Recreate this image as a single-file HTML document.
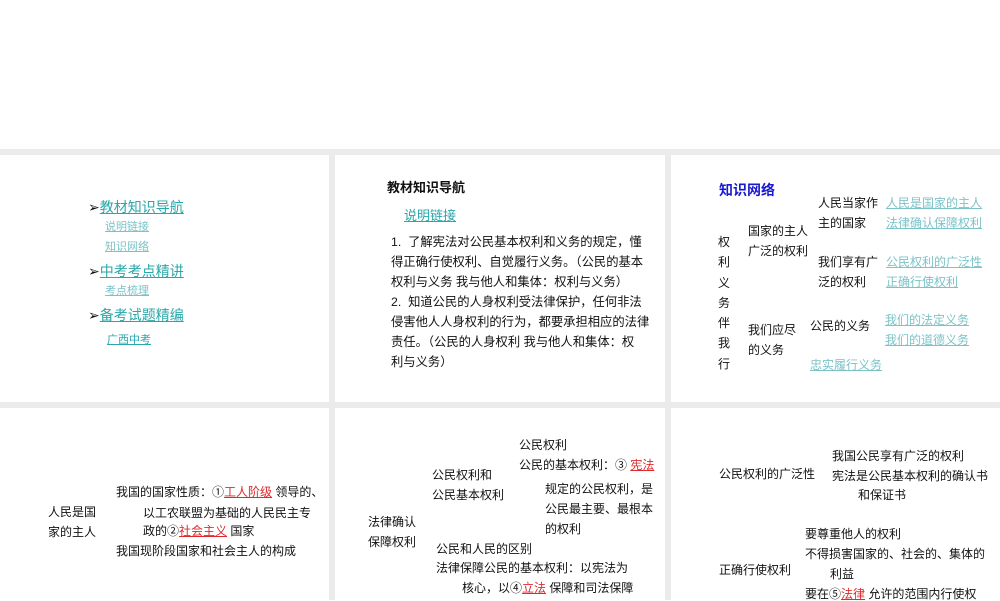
<!DOCTYPE html>
<html><head><meta charset="utf-8"><style>
body{margin:0;width:1000px;height:600px;position:relative;background:#fff;overflow:hidden;font-family:"Liberation Sans","Noto Sans CJK SC",sans-serif;}
.g{position:absolute;background:#ebebeb;}
.t{position:absolute;white-space:nowrap;font-size:12px;color:#111;line-height:14px;}
.l{color:#2aa7a9;text-decoration:underline;}
.lt{color:#7cc3c8;text-decoration:underline;}
.r{color:#e0292b;text-decoration:underline;text-decoration-color:#e0292b;}
.b{font-weight:bold;}
.s{font-family:"Liberation Sans","WenQuanYi Zen Hei",sans-serif;font-size:12.3px !important;}
</style></head><body>
<div class="g" style="left:0;top:149px;width:1000px;height:6px"></div>
<div class="g" style="left:0;top:402px;width:1000px;height:6px"></div>
<div class="g" style="left:329px;top:149px;width:6px;height:451px"></div>
<div class="g" style="left:665px;top:149px;width:6px;height:451px"></div>

<div class="t" style="left:88px;top:199px;font-size:14px;line-height:16px">➢<span class="l">教材知识导航</span></div>
<div class="t lt" style="left:105px;top:220px;font-size:11px">说明链接</div>
<div class="t lt" style="left:105px;top:240px;font-size:11px">知识网络</div>
<div class="t" style="left:88px;top:263px;font-size:14px;line-height:16px">➢<span class="l">中考考点精讲</span></div>
<div class="t lt" style="left:105px;top:284px;font-size:11px">考点梳理</div>
<div class="t" style="left:88px;top:307px;font-size:14px;line-height:16px">➢<span class="l">备考试题精编</span></div>
<div class="t l" style="left:107px;top:333px;font-size:11px">广西中考</div>

<div class="t b" style="left:387px;top:181px;font-size:13px">教材知识导航</div>
<div class="t l" style="left:404px;top:209px;font-size:13px">说明链接</div>
<div class="t s" style="left:391px;top:235px">1.&nbsp;&nbsp;了解宪法对公民基本权利和义务的规定，懂</div>
<div class="t s" style="left:391px;top:255px">得正确行使权利、自觉履行义务。（公民的基本</div>
<div class="t s" style="left:391px;top:275px">权利与义务 我与他人和集体：权利与义务）</div>
<div class="t s" style="left:391px;top:295px">2.&nbsp;&nbsp;知道公民的人身权利受法律保护，任何非法</div>
<div class="t s" style="left:391px;top:315px">侵害他人人身权利的行为，都要承担相应的法律</div>
<div class="t s" style="left:391px;top:335px">责任。（公民的人身权利 我与他人和集体：权</div>
<div class="t s" style="left:391px;top:355px">利与义务）</div>

<div class="t b" style="left:719px;top:183px;font-size:14px;color:#1a1ad0">知识网络</div>
<div class="t" style="left:718px;top:232px;line-height:20.3px">权<br>利<br>义<br>务<br>伴<br>我<br>行</div>
<div class="t" style="left:748px;top:221px;line-height:20px">国家的主人<br>广泛的权利</div>
<div class="t" style="left:818px;top:193px;line-height:20px">人民当家作<br>主的国家</div>
<div class="t lt" style="left:886px;top:193px;line-height:20px">人民是国家的主人<br>法律确认保障权利</div>
<div class="t" style="left:818px;top:252px;line-height:20px">我们享有广<br>泛的权利</div>
<div class="t lt" style="left:886px;top:252px;line-height:20px">公民权利的广泛性<br>正确行使权利</div>
<div class="t" style="left:748px;top:320px;line-height:20px">我们应尽<br>的义务</div>
<div class="t" style="left:810px;top:319px">公民的义务</div>
<div class="t lt" style="left:885px;top:310px;line-height:20px">我们的法定义务<br>我们的道德义务</div>
<div class="t lt" style="left:810px;top:358px">忠实履行义务</div>

<div class="t" style="left:48px;top:502px;line-height:20px">人民是国<br>家的主人</div>
<div class="t" style="left:116px;top:485px">我国的国家性质：①<span class="r">工人阶级</span> 领导的、</div>
<div class="t" style="left:143px;top:506px">以工农联盟为基础的人民民主专</div>
<div class="t" style="left:143px;top:524px">政的②<span class="r">社会主义</span> 国家</div>
<div class="t" style="left:116px;top:544px">我国现阶段国家和社会主人的构成</div>

<div class="t" style="left:368px;top:512px;line-height:20px">法律确认<br>保障权利</div>
<div class="t" style="left:432px;top:465px;line-height:20px">公民权利和<br>公民基本权利</div>
<div class="t" style="left:519px;top:438px">公民权利</div>
<div class="t" style="left:519px;top:458px">公民的基本权利：③ <span class="r">宪法</span></div>
<div class="t" style="left:545px;top:479px;line-height:20px">规定的公民权利，是<br>公民最主要、最根本<br>的权利</div>
<div class="t" style="left:436px;top:542px">公民和人民的区别</div>
<div class="t" style="left:436px;top:561px">法律保障公民的基本权利：以宪法为</div>
<div class="t" style="left:462px;top:581px">核心，以④<span class="r">立法</span> 保障和司法保障</div>

<div class="t" style="left:719px;top:467px">公民权利的广泛性</div>
<div class="t" style="left:832px;top:449px">我国公民享有广泛的权利</div>
<div class="t" style="left:832px;top:469px">宪法是公民基本权利的确认书</div>
<div class="t" style="left:858px;top:488px">和保证书</div>
<div class="t" style="left:805px;top:527px">要尊重他人的权利</div>
<div class="t" style="left:805px;top:547px">不得损害国家的、社会的、集体的</div>
<div class="t" style="left:830px;top:567px">利益</div>
<div class="t" style="left:719px;top:563px">正确行使权利</div>
<div class="t" style="left:805px;top:587px">要在⑤<span class="r">法律</span> 允许的范围内行使权</div>
</body></html>
